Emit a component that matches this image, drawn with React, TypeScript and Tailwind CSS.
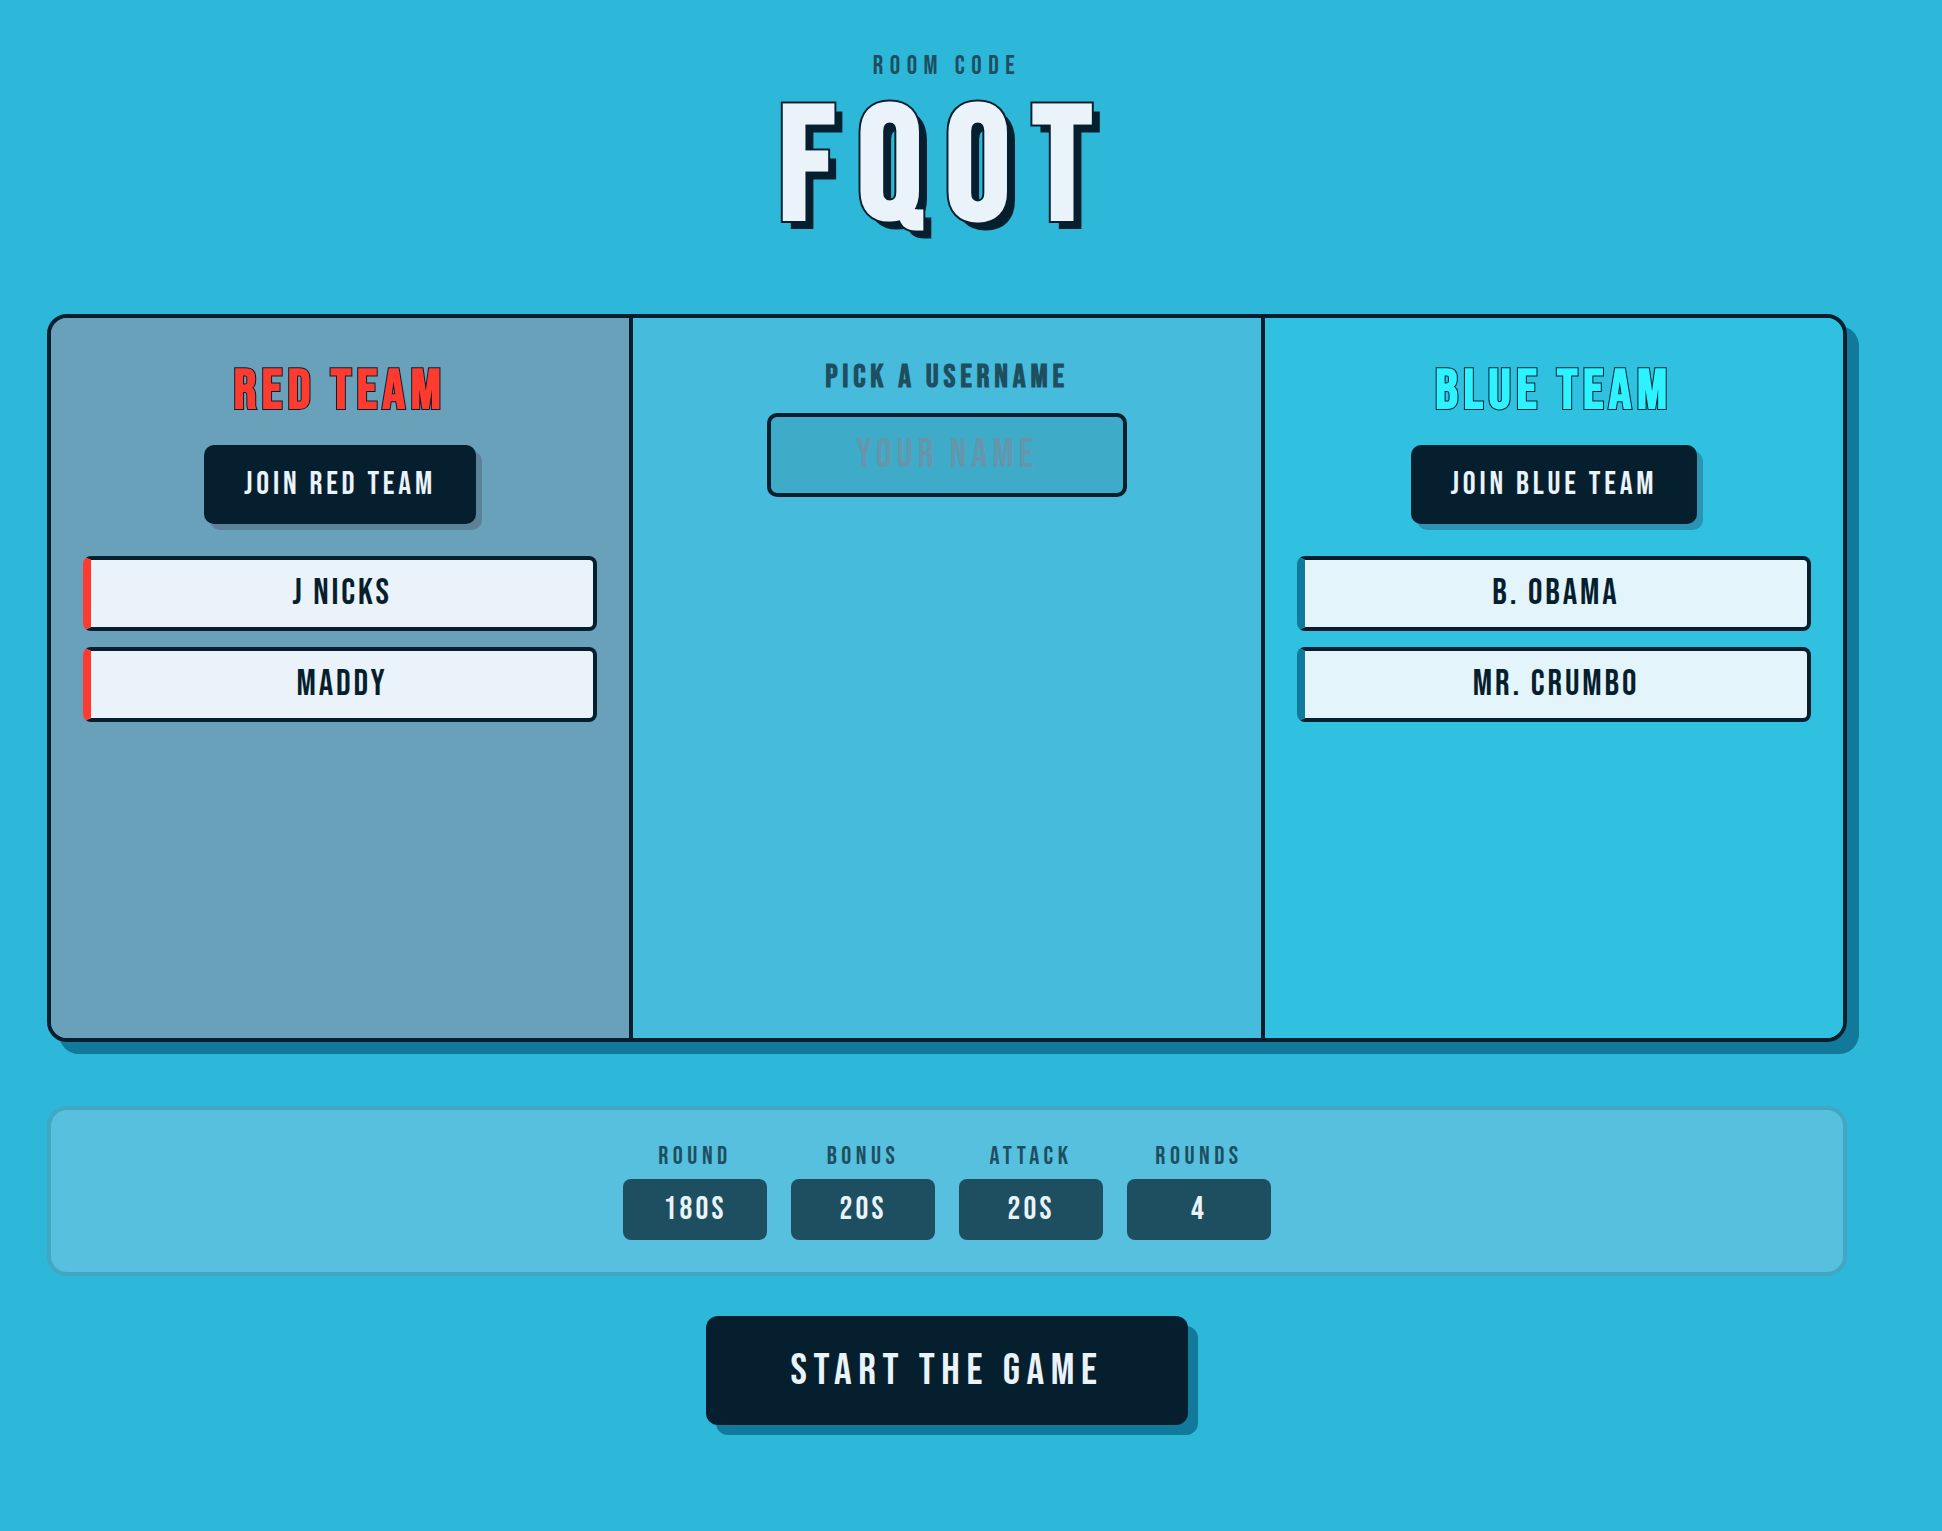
import { useState } from 'react'

interface Team {
  id: 'red' | 'blue'
  title: string
  action: string
  players: string[]
}

const redTeam: Team = {
  id: 'red',
  title: 'RED TEAM',
  action: 'JOIN RED TEAM',
  players: ['J NICKS', 'MADDY'],
}

const blueTeam: Team = {
  id: 'blue',
  title: 'BLUE TEAM',
  action: 'JOIN BLUE TEAM',
  players: ['B. OBAMA', 'MR. CRUMBO'],
}

const settings = [
  { label: 'ROUND', value: '180S' },
  { label: 'BONUS', value: '20S' },
  { label: 'ATTACK', value: '20S' },
  { label: 'ROUNDS', value: '4' },
]

const teamStyles = {
  red: {
    panel: 'bg-[#69a1bb]',
    title: 'text-[#ff3b2f]',
    button: 'shadow-[6px_6px_0_#5b8298]',
    player: 'border-l-[#ff3b2f] bg-[#eaf3fa]',
  },
  blue: {
    panel: 'bg-[#2fc1df]',
    title: 'text-[#2cf3ff]',
    button: 'shadow-[6px_6px_0_#2b94b4]',
    player: 'border-l-[#117a9b] bg-[#e3f4fb]',
  },
}

function TeamPanel({ team }: { team: Team }) {
  const styles = teamStyles[team.id]
  return (
    <section className={`flex flex-col items-center p-8 ${styles.panel}`}>
      <h2 className={`mb-3 text-[56px] leading-[83px] font-bold tracking-widest [paint-order:stroke_fill] [-webkit-text-stroke:2px_#061f2e] ${styles.title}`}>
        {team.title}
      </h2>
      <button type="button" className={`mb-8 rounded-[10px] bg-[#061f2e] px-10 py-5 text-[32px] leading-[39px] tracking-[0.12em] text-[#eaf3fa] ${styles.button}`}>
        {team.action}
      </button>
      <ul className="flex w-full flex-col gap-4">
        {team.players.map((player) => (
          <li key={player} className={`rounded-lg border-4 border-l-8 border-[#061f2e] px-4 py-3 text-center text-[36px] leading-[43px] tracking-[0.08em] ${styles.player}`}>
            {player}
          </li>
        ))}
      </ul>
    </section>
  )
}

export default function App() {
  const [username, setUsername] = useState('')

  return (
    <div className="min-h-screen bg-[#2db7d9] pr-12 font-['Bebas_Neue','Liberation_Sans_Narrow','Liberation_Sans',sans-serif] text-[#061f2e]">
      <main className="mx-auto flex max-w-[1800px] flex-col items-center pt-12 pb-24">
        <header className="mb-[60px] text-center">
          <p className="text-[26px] leading-[38px] tracking-[0.25em] text-[#1d4f61]">ROOM CODE</p>
          <h1 className="text-[160px] leading-[168px] font-bold tracking-[0.15em] text-[#eaf3fa] [paint-order:stroke_fill] [-webkit-text-stroke:4px_#061f2e] [text-shadow:8px_8px_0_#061f2e]">
            FQOT
          </h1>
        </header>

        <div className="mb-16 grid min-h-[728px] w-full grid-cols-[1fr_1.1fr_1fr] overflow-hidden rounded-[20px] border-4 border-[#061f2e] shadow-[12px_12px_0_#117a9b]">
          <TeamPanel team={redTeam} />
          <section className="flex flex-col items-center border-x-4 border-[#061f2e] bg-[#47bbdb] p-8">
            <label htmlFor="username" className="mb-2 text-[32px] leading-[55px] font-bold tracking-[0.15em] text-[#1d4f61]">
              PICK A USERNAME
            </label>
            <input
              id="username"
              value={username}
              onChange={(e) => setUsername(e.target.value)}
              placeholder="YOUR NAME"
              className="w-full max-w-[360px] rounded-[10px] border-4 border-[#061f2e] bg-[#3eacc9] px-6 py-[14px] text-center text-[40px] leading-[48px] tracking-[0.12em] outline-none placeholder:text-[#6496ac]"
            />
          </section>
          <TeamPanel team={blueTeam} />
        </div>

        <dl className="mb-10 flex w-full justify-center gap-6 rounded-[20px] border-4 border-[#43a7c3] bg-[#57c0de] p-8">
          {settings.map((setting) => (
            <div key={setting.label} className="w-36 text-center">
              <dt className="mb-2 text-[25px] leading-[29px] tracking-[0.18em] text-[#1d4f61]">{setting.label}</dt>
              <dd className="rounded-lg bg-[#1d4f61] py-3 text-[32px] leading-[37px] tracking-widest text-[#eaf3fa]">{setting.value}</dd>
            </div>
          ))}
        </dl>

        <button type="button" className="rounded-xl bg-[#061f2e] px-[84px] py-7 text-[44px] leading-[53px] tracking-[0.15em] text-[#eaf3fa] shadow-[10px_10px_0_#117a9b]">
          START THE GAME
        </button>
      </main>
    </div>
  )
}
